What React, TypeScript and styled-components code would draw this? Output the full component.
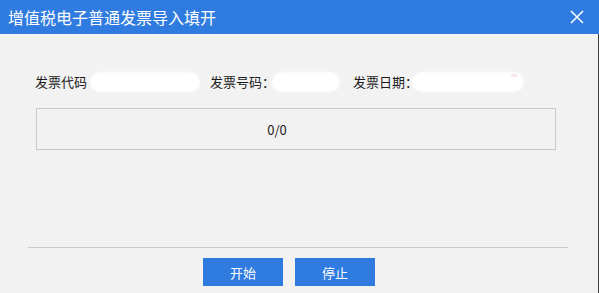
import React from "react";
import styled, { createGlobalStyle } from "styled-components";

const GlobalStyle = createGlobalStyle`
  html, body {
    margin: 0;
    padding: 0;
    background: #f2f2f2;
    font-family: "Microsoft YaHei", "Noto Sans CJK SC", "Noto Sans", sans-serif;
  }
`;

const Dialog = styled.div`
  width: 599px;
  height: 293px;
  display: flex;
  flex-direction: column;
  background-color: #f2f2f2;
  overflow: hidden;
`;

const TitleBar = styled.div`
  height: 34px;
  flex-shrink: 0;
  background-color: #307bdf;
  display: flex;
  align-items: center;
  justify-content: space-between;
  padding: 0 14px 0 8px;
  color: #ffffff;
`;

const Title = styled.div`
  font-size: 16px;
  line-height: 34px;
  letter-spacing: 0;
`;

const CloseButton = styled.button`
  width: 16px;
  height: 16px;
  padding: 0;
  border: none;
  background: transparent;
  display: flex;
  align-items: center;
  justify-content: center;
  cursor: pointer;
`;

const Body = styled.div`
  flex: 1;
  border-right: 1px solid #3d3d3d;
  display: flex;
  flex-direction: column;
`;

const FieldRow = styled.div`
  display: flex;
  align-items: center;
  height: 20px;
  margin-top: 38px;
  padding-left: 35px;
  font-size: 13px;
  color: #1a1a1a;
`;

const Field = styled.div<{ gap: number }>`
  display: flex;
  align-items: center;
  margin-right: ${(p) => p.gap}px;
`;

const Label = styled.span`
  white-space: nowrap;
  line-height: 20px;
`;

const Blob = styled.span<{ w: number; offset: number }>`
  display: inline-block;
  position: relative;
  width: ${(p) => p.w}px;
  height: 20px;
  margin-left: ${(p) => p.offset}px;
  background: #ffffff;
  border-radius: 10px;
  filter: blur(0.8px);
`;

const Mark = styled.span`
  position: absolute;
  right: 7px;
  top: 3px;
  width: 6px;
  height: 1px;
  background: #e5a3ae;
`;

const ProgressBox = styled.div`
  margin: 16px 0 0 36px;
  height: 40px;
  border: 1px solid #c9c9c9;
  display: flex;
  align-items: center;
  justify-content: center;
  padding-right: 38px;
  box-sizing: content-box;
  width: 480px;
  font-size: 13px;
  color: #1a1a1a;
`;

const Divider = styled.div`
  margin: 97px 0 0 28px;
  width: 540px;
  height: 1px;
  background: #cacaca;
`;

const ButtonRow = styled.div`
  display: flex;
  gap: 12px;
  margin-top: 10px;
  padding-left: 203px;
`;

const ActionButton = styled.button`
  width: 80px;
  height: 28px;
  border: none;
  border-radius: 0;
  background: #307bdf;
  color: #ffffff;
  font-family: inherit;
  font-size: 13px;
  padding: 0;
  cursor: pointer;
`;

const App: React.FC = () => {
  return (
    <>
      <GlobalStyle />
      <Dialog>
        <TitleBar>
          <Title>增值税电子普通发票导入填开</Title>
          <CloseButton aria-label="关闭">
            <svg width="14" height="14" viewBox="0 0 14 14">
              <path d="M1 1L13 13M13 1L1 13" stroke="#ffffff" strokeWidth="1.5" fill="none" />
            </svg>
          </CloseButton>
        </TitleBar>
        <Body>
          <FieldRow>
            <Field gap={10}>
              <Label>发票代码</Label>
              <Blob w={110} offset={3} />
            </Field>
            <Field gap={13}>
              <Label>发票号码：</Label>
              <Blob w={68} offset={-3} />
            </Field>
            <Field gap={0}>
              <Label>发票日期：</Label>
              <Blob w={112} offset={-6}>
                <Mark />
              </Blob>
            </Field>
          </FieldRow>
          <ProgressBox>0/0</ProgressBox>
          <Divider />
          <ButtonRow>
            <ActionButton>开始</ActionButton>
            <ActionButton>停止</ActionButton>
          </ButtonRow>
        </Body>
      </Dialog>
    </>
  );
};

export default App;
